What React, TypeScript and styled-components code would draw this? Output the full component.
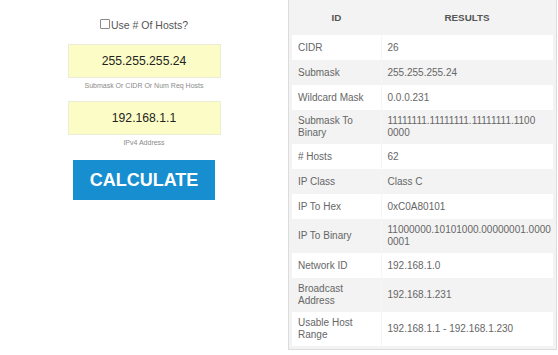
import React from "react";
import styled, { createGlobalStyle } from "styled-components";

const Global = createGlobalStyle`
  html, body { margin: 0; padding: 0; background: #fff; }
  body { font-family: "Liberation Sans", Arial, sans-serif; }
`;

const Page = styled.div`
  display: flex;
  align-items: flex-start;
  width: 558px;
  height: 355px;
  overflow: hidden;
`;

const Form = styled.div`
  width: 288px;
  display: flex;
  flex-direction: column;
  align-items: center;
  padding-top: 18px;
`;

const CheckRow = styled.label`
  display: flex;
  align-items: center;
  height: 14px;
  font-size: 10.5px;
  color: #555;
  margin-bottom: 12px;
`;

const Box = styled.input`
  appearance: none;
  width: 10px;
  height: 10px;
  margin: 0 1px 2px 0;
  border: 1px solid #8a8a8a;
  border-radius: 1px;
  background: #fff;
`;

const Field = styled.div<{ $gap: number }>`
  display: flex;
  flex-direction: column;
  align-items: center;
  margin-bottom: ${(p) => p.$gap}px;
`;

const TextBox = styled.input`
  box-sizing: border-box;
  width: 153px;
  height: 34px;
  background: #fcfdc6;
  border: 1px solid #ecedd6;
  text-align: center;
  font-family: "Liberation Sans", Arial, sans-serif;
  font-size: 12.2px;
  color: #222;
  outline: none;
  padding: 0;
`;

const Hint = styled.div`
  margin-top: 3px;
  font-size: 7px;
  line-height: 9px;
  color: #8a8a8a;
`;

const Button = styled.button`
  width: 142px;
  height: 40px;
  border: none;
  background: #168ed0;
  color: #fff;
  font-family: "Liberation Sans", Arial, sans-serif;
  font-weight: bold;
  font-size: 18px;
  padding: 0;
`;

const Panel = styled.div`
  width: 261px;
  background: #f3f3f3;
  border: 1px solid #dcdcdc;
  border-top: none;
  padding: 0 3px 3px 3px;
`;

const Table = styled.table`
  width: 261px;
  border-collapse: collapse;
  table-layout: fixed;
  font-size: 10px;
  color: #666;
`;

const Head = styled.th`
  height: 35px;
  padding: 0;
  font-weight: bold;
  font-size: 9.8px;
  color: #555;
  text-align: center;
`;

const Row = styled.tr<{ $white: boolean }>`
  background: ${(p) => (p.$white ? "#fff" : "transparent")};
`;

const Cell = styled.td<{ $first?: boolean }>`
  height: 25px;
  box-sizing: border-box;
  padding: 5px 6px;
  line-height: 12px;
  vertical-align: middle;
  white-space: pre-line;
  border-left: ${(p) => (p.$first ? "none" : "1px solid #f6f6f6")};
`;

const wrapAt = (s: string, n: number) =>
  s.length > n && !s.includes(" ") ? s.slice(0, n) + "\n" + s.slice(n) : s;

const rows: [string, string][] = [
  ["CIDR", "26"],
  ["Submask", "255.255.255.24"],
  ["Wildcard Mask", "0.0.0.231"],
  ["Submask To Binary", "11111111.11111111.11111111.11000000"],
  ["# Hosts", "62"],
  ["IP Class", "Class C"],
  ["IP To Hex", "0xC0A80101"],
  ["IP To Binary", "11000000.10101000.00000001.00000001"],
  ["Network ID", "192.168.1.0"],
  ["Broadcast Address", "192.168.1.231"],
  ["Usable Host Range", "192.168.1.1 - 192.168.1.230"],
];

export default function App() {
  return (
    <Page>
      <Global />
      <Form>
        <CheckRow>
          <Box type="checkbox" />
          Use # Of Hosts?
        </CheckRow>
        <Field $gap={11}>
          <TextBox defaultValue="255.255.255.24" />
          <Hint>Submask Or CIDR Or Num Req Hosts</Hint>
        </Field>
        <Field $gap={13}>
          <TextBox defaultValue="192.168.1.1" />
          <Hint>IPv4 Address</Hint>
        </Field>
        <Button>CALCULATE</Button>
      </Form>
      <Panel>
        <Table>
          <colgroup>
            <col style={{ width: 89 }} />
            <col />
          </colgroup>
          <thead>
            <tr>
              <Head>ID</Head>
              <Head>RESULTS</Head>
            </tr>
          </thead>
          <tbody>
            {rows.map(([k, v], i) => (
              <Row key={k} $white={i % 2 === 0}>
                <Cell $first>{k}</Cell>
                <Cell>{wrapAt(v, 31)}</Cell>
              </Row>
            ))}
          </tbody>
        </Table>
      </Panel>
    </Page>
  );
}
